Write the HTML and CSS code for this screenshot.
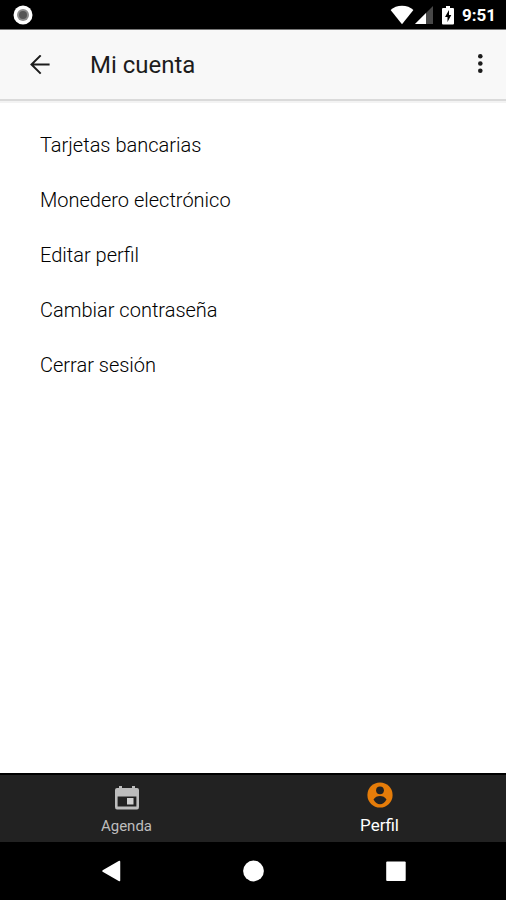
FILE: index.html
```html
<!DOCTYPE html>
<html lang="es">
<head>
<meta charset="utf-8">
<meta name="viewport" content="width=device-width, initial-scale=1">
<title>Mi cuenta</title>
<link rel="stylesheet" href="styles.css">
</head>
<body>
<div class="status-bar">
  <svg class="status-dot" width="20" height="20" viewBox="0 0 20 20" aria-hidden="true"><circle cx="10" cy="10" r="9.5" fill="#fff"/><circle cx="10" cy="10" r="6" fill="#8c8c8c"/><circle cx="10" cy="10" r="4" fill="#555"/></svg>
  <svg class="wifi" width="24" height="20" viewBox="0 0 24 20" aria-hidden="true"><path d="M12 19.2 0.6 5C3.500 2.300 7.500 0.800 12 0.800S20.500 2.300 23.400 5Z" fill="#fff"/></svg>
  <svg class="signal" width="18" height="20" viewBox="0 0 18 20" aria-hidden="true"><path d="M0 19 18 1v18Z" fill="#484848"/><path d="M0 19 11 8v11Z" fill="#fff"/></svg>
  <svg class="battery" width="12" height="20" viewBox="0 0 12 20" aria-hidden="true"><path d="M4 1h4v2h3q1 0 1 1v14.500q0 1-1 1H1q-1 0-1-1V4q0-1 1-1h3Z" fill="#fff"/><path d="M7 5 3 12h2.500v5L9.300 10H7Z" fill="#000"/></svg>
  <span class="clock">9:51</span>
</div>
<header class="app-bar">
  <button class="icon-button" type="button" aria-label="Volver">
    <svg width="20" height="20" viewBox="0 0 20 20" aria-hidden="true"><path d="M19.600 9.500H1.500M10.700 0.400 1.500 9.500l9.200 9.100" fill="none" stroke="#1c1c1c" stroke-width="2"/></svg>
  </button>
  <h1 class="title">Mi cuenta</h1>
  <button class="icon-button menu-button" type="button" aria-label="Más opciones">
    <svg width="20" height="24" viewBox="0 0 20 24" aria-hidden="true"><g fill="#1c1c1c"><circle cx="10.300" cy="3.200" r="2.300"/><circle cx="10.300" cy="10.500" r="2.300"/><circle cx="10.300" cy="17.800" r="2.300"/></g></svg>
  </button>
</header>
<main class="content">
  <nav aria-label="Cuenta">
    <ul class="options">
      <li><a href="#tarjetas">Tarjetas bancarias</a></li>
      <li><a href="#monedero">Monedero electrónico</a></li>
      <li><a href="#editar">Editar perfil</a></li>
      <li><a href="#contrasena">Cambiar contraseña</a></li>
      <li><a href="#salir">Cerrar sesión</a></li>
    </ul>
  </nav>
</main>
<nav class="tabs" aria-label="Principal">
  <a class="tab" href="#agenda">
    <svg width="26" height="26" viewBox="0 0 26 26" aria-hidden="true"><path fill="#bdbdbd" fill-rule="evenodd" d="M5 1h3v2h10V1h3v2h2q2 0 2 2v17q0 2.500-2 2.500H3q-2 0-2-2.500V5q0-2 2-2h2ZM3.600 11.500v10h18.800v-10Z"/><path fill="#d0d0d0" d="M13 13h6.500v6.500H13Z"/></svg>
    <span>Agenda</span>
  </a>
  <a class="tab tab-active" href="#perfil" aria-current="page">
    <svg width="26" height="26" viewBox="0 0 26 26" aria-hidden="true"><circle cx="13" cy="13" r="12.600" fill="#e57c09"/><circle cx="13" cy="8.300" r="3.900" fill="#222"/><path fill="#222" d="M6.500 17.500C8 15 10.300 13.900 13 13.900s5 1.100 6.500 3.600C18 20.500 15.500 22.200 13 22.200S8 20.500 6.500 17.500Z"/></svg>
    <span>Perfil</span>
  </a>
</nav>
<div class="system-bar">
  <button type="button" aria-label="Atrás"><svg width="22" height="22" viewBox="0 0 22 22" aria-hidden="true"><path d="M3 11 19.500 1.500v19Z" fill="#fff" stroke="#fff" stroke-width="1.500" stroke-linejoin="round"/></svg></button>
  <button type="button" aria-label="Inicio"><svg width="22" height="22" viewBox="0 0 22 22" aria-hidden="true"><circle cx="11.500" cy="11" r="10.400" fill="#fff"/></svg></button>
  <button type="button" aria-label="Recientes"><svg width="22" height="22" viewBox="0 0 22 22" aria-hidden="true"><rect x="2.200" y="1.500" width="19.500" height="19.500" rx="1" fill="#fff"/></svg></button>
</div>
</body>
</html>
```
FILE: styles.css
```css
* { box-sizing: border-box; }

body {
  margin: 0;
  min-height: 100vh;
  display: flex;
  flex-direction: column;
  background: #fff;
  color: #1c1c1c;
  font-family: Roboto, "Liberation Sans", sans-serif;
}

svg { display: block; }

button {
  padding: 0;
  border: 0;
  background: none;
}

a {
  color: inherit;
  text-decoration: none;
}

.status-bar {
  display: flex;
  align-items: center;
  height: 30px;
  padding: 1px 10px 0 13px;
  background: #000;
  border-bottom: 1px solid #777;
  color: #fff;
}

.status-dot { margin-right: auto; }
.wifi { margin-right: 1px; }
.signal { margin-right: 9px; }
.battery { margin-right: 8px; }

.clock {
  font-size: 17px;
  font-weight: 700;
  line-height: 20px;
}

.app-bar {
  display: flex;
  align-items: center;
  height: 71px;
  padding: 0 10px 0 24px;
  background: #f8f8f8;
  border-bottom: 2px solid #dadada;
  box-shadow: 0 2px 0 #f3f3f3;
}

.icon-button {
  display: grid;
  place-items: center;
  width: 32px;
  height: 32px;
}

.menu-button { margin-left: auto; }

.title {
  margin: 0 0 0 34px;
  font-size: 24px;
  font-weight: 400;
  line-height: 32px;
}

.content { flex: 1; }

.options {
  margin: 0;
  padding: 17px 0;
  list-style: none;
}

.options a {
  display: block;
  padding: 15px 40px 16px;
  color: #000;
  font-size: 20px;
  font-weight: 300;
  line-height: 24px;
}

.tabs {
  display: flex;
  height: 69px;
  background: #222;
  border-top: 2px solid #000;
  color: #bdbdbd;
}

.tab {
  flex: 1;
  display: flex;
  flex-direction: column;
  align-items: center;
  gap: 5px;
  padding-top: 10px;
  font-size: 15px;
  line-height: 20px;
}

.tab-active {
  gap: 7px;
  padding-top: 7px;
  color: #fff;
  font-size: 17px;
}

.system-bar {
  display: grid;
  grid-template-columns: repeat(3, 1fr);
  height: 58px;
  padding: 0 40px;
  background: #000;
}

.system-bar button {
  display: grid;
  place-items: center;
}
```
